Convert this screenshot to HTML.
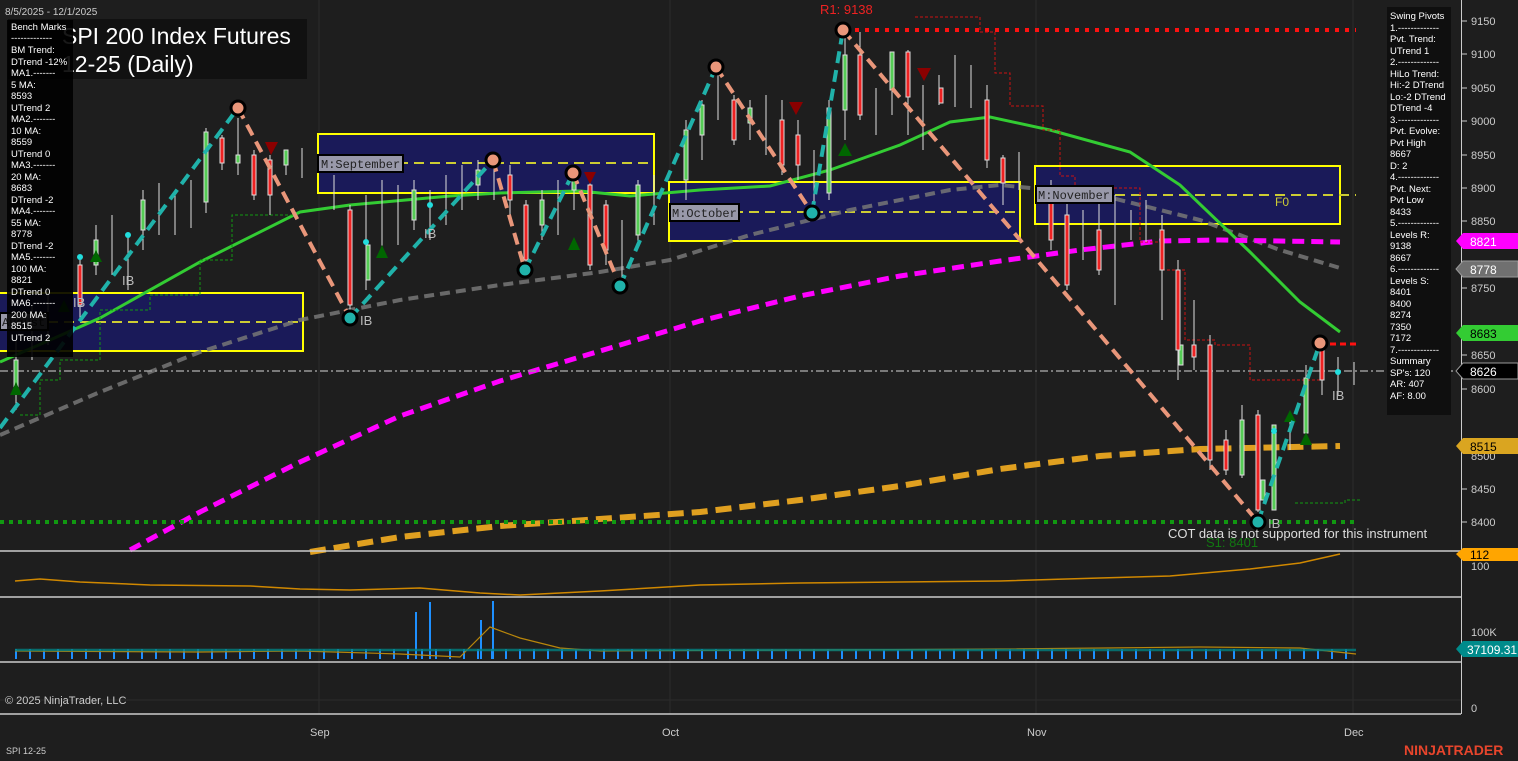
<!DOCTYPE html>
<html><head><meta charset="utf-8"><style>
html,body{margin:0;padding:0;background:#1e1e1e;width:1518px;height:761px;overflow:hidden;font-family:"Liberation Sans",sans-serif}
svg{position:absolute;left:0;top:0}
</style></head><body>
<svg width="1518" height="761" viewBox="0 0 1518 761" font-family="Liberation Sans, sans-serif">
<rect width="1518" height="761" fill="#1e1e1e"/>
<g stroke="#2c2c2c" stroke-width="1">
<line x1="319" y1="0" x2="319" y2="714"/><line x1="670" y1="0" x2="670" y2="714"/><line x1="1036" y1="0" x2="1036" y2="714"/><line x1="1353" y1="0" x2="1353" y2="714"/>
<line x1="0" y1="700" x2="1461" y2="700"/>
</g>
<g fill="#1a1a5e" fill-opacity="0.92" stroke="#ffff00" stroke-width="2">
<rect x="-2" y="293" width="305" height="58"/>
<rect x="318" y="134" width="336" height="59"/>
<rect x="669" y="182" width="351" height="59"/>
<rect x="1035" y="166" width="305" height="58"/>
</g>
<g stroke="#cccc33" stroke-width="2" stroke-dasharray="10,6">
<line x1="0" y1="322" x2="303" y2="322"/><line x1="318" y1="163" x2="654" y2="163"/><line x1="669" y1="212" x2="1020" y2="212"/><line x1="1035" y1="195" x2="1356" y2="195"/>
</g>
<polyline fill="none" stroke="#777" stroke-width="4" stroke-dasharray="10,6" stroke-opacity="0.85" points="0,435 100,392 200,352 300,320 400,300 500,285 600,272 670,260 750,235 850,210 950,190 1000,185 1100,195 1200,220 1280,250 1340,268"/>
<polyline fill="none" stroke="#33cc33" stroke-width="3" points="0,362 100,318 200,262 300,212 350,205 450,196 500,193 580,191 630,196 700,190 770,186 830,170 900,145 950,122 990,117 1050,130 1130,152 1180,185 1250,252 1300,302 1340,332"/>
<polyline fill="none" stroke="#ff00ff" stroke-width="5" stroke-dasharray="12,7" points="130,550 200,512 300,462 400,416 500,381 600,351 700,321 800,296 900,276 1000,261 1080,250 1160,241 1220,240 1340,242"/>
<polyline fill="none" stroke="#e0a020" stroke-width="6" stroke-dasharray="16,8" points="310,552 400,537 500,526 700,512 800,500 900,486 1000,469 1100,456 1200,449 1340,446"/>
<line x1="0" y1="371" x2="1461" y2="371" stroke="#999" stroke-width="1.5" stroke-dasharray="8,3,2,3"/>
<line x1="0" y1="522" x2="1356" y2="522" stroke="#119911" stroke-width="4" stroke-dasharray="4,5"/>
<line x1="845" y1="30" x2="1356" y2="30" stroke="#ff1111" stroke-width="4" stroke-dasharray="4,6"/>
<line x1="1320" y1="344" x2="1356" y2="344" stroke="#ff1111" stroke-width="3" stroke-dasharray="6,4"/>
<polyline fill="none" stroke="#cc1111" stroke-width="1" stroke-dasharray="3,2" points="915,17 980,17 980,32 995,32 995,73 1010,73 1010,106 1043,106 1043,130 1060,130 1060,176 1075,176 1075,188 1140,188 1140,242 1160,242 1160,270 1185,270 1185,340 1215,340 1215,345 1250,345 1250,380 1320,380"/>
<polyline fill="none" stroke="#119911" stroke-width="1" stroke-dasharray="3,2" points="20,415 40,415 40,380 60,380 60,360 100,360 100,310 150,310 150,295 200,295 200,260 232,260 232,215 300,215"/>
<polyline fill="none" stroke="#119911" stroke-width="1" stroke-dasharray="3,2" points="1295,503 1345,503 1345,500 1360,500"/>
<g stroke-width="1">
<g stroke="#ddd"><line x1="16" y1="340" x2="16" y2="410"/><line x1="32" y1="305" x2="32" y2="360"/><line x1="48" y1="290" x2="48" y2="345"/><line x1="80" y1="255" x2="80" y2="320"/><line x1="96" y1="225" x2="96" y2="275"/><line x1="112" y1="215" x2="112" y2="275"/><line x1="128" y1="235" x2="128" y2="290"/><line x1="143" y1="190" x2="143" y2="250"/><line x1="159" y1="183" x2="159" y2="235"/><line x1="175" y1="195" x2="175" y2="235"/><line x1="191" y1="180" x2="191" y2="228"/><line x1="206" y1="128" x2="206" y2="213"/><line x1="222" y1="135" x2="222" y2="170"/><line x1="238" y1="118" x2="238" y2="175"/><line x1="254" y1="150" x2="254" y2="200"/><line x1="270" y1="155" x2="270" y2="215"/><line x1="286" y1="150" x2="286" y2="175"/><line x1="302" y1="148" x2="302" y2="178"/><line x1="334" y1="175" x2="334" y2="210"/><line x1="350" y1="205" x2="350" y2="315"/><line x1="366" y1="195" x2="366" y2="290"/><line x1="382" y1="180" x2="382" y2="250"/><line x1="398" y1="185" x2="398" y2="245"/><line x1="414" y1="180" x2="414" y2="230"/><line x1="430" y1="190" x2="430" y2="240"/><line x1="446" y1="175" x2="446" y2="225"/><line x1="462" y1="165" x2="462" y2="210"/><line x1="478" y1="160" x2="478" y2="200"/><line x1="494" y1="158" x2="494" y2="200"/><line x1="510" y1="165" x2="510" y2="220"/><line x1="526" y1="200" x2="526" y2="270"/><line x1="542" y1="190" x2="542" y2="240"/><line x1="558" y1="180" x2="558" y2="235"/><line x1="574" y1="170" x2="574" y2="210"/><line x1="590" y1="180" x2="590" y2="270"/><line x1="606" y1="200" x2="606" y2="265"/><line x1="622" y1="220" x2="622" y2="285"/><line x1="638" y1="180" x2="638" y2="245"/><line x1="654" y1="175" x2="654" y2="225"/><line x1="686" y1="120" x2="686" y2="200"/><line x1="702" y1="100" x2="702" y2="160"/><line x1="718" y1="66" x2="718" y2="120"/><line x1="734" y1="95" x2="734" y2="145"/><line x1="750" y1="100" x2="750" y2="140"/><line x1="766" y1="95" x2="766" y2="155"/><line x1="782" y1="100" x2="782" y2="175"/><line x1="798" y1="120" x2="798" y2="180"/><line x1="814" y1="150" x2="814" y2="210"/><line x1="829" y1="100" x2="829" y2="200"/><line x1="845" y1="32" x2="845" y2="140"/><line x1="860" y1="32" x2="860" y2="120"/><line x1="876" y1="88" x2="876" y2="135"/><line x1="892" y1="55" x2="892" y2="115"/><line x1="908" y1="50" x2="908" y2="135"/><line x1="923" y1="85" x2="923" y2="150"/><line x1="939" y1="75" x2="939" y2="105"/><line x1="955" y1="55" x2="955" y2="107"/><line x1="971" y1="65" x2="971" y2="108"/><line x1="987" y1="85" x2="987" y2="168"/><line x1="1003" y1="155" x2="1003" y2="205"/><line x1="1019" y1="152" x2="1019" y2="190"/><line x1="1051" y1="180" x2="1051" y2="250"/><line x1="1067" y1="200" x2="1067" y2="290"/><line x1="1083" y1="210" x2="1083" y2="260"/><line x1="1099" y1="200" x2="1099" y2="275"/><line x1="1115" y1="195" x2="1115" y2="305"/><line x1="1131" y1="210" x2="1131" y2="240"/><line x1="1146" y1="200" x2="1146" y2="242"/><line x1="1162" y1="215" x2="1162" y2="320"/><line x1="1178" y1="260" x2="1178" y2="380"/><line x1="1194" y1="300" x2="1194" y2="370"/><line x1="1210" y1="335" x2="1210" y2="470"/><line x1="1226" y1="430" x2="1226" y2="475"/><line x1="1242" y1="405" x2="1242" y2="478"/><line x1="1258" y1="410" x2="1258" y2="512"/><line x1="1274" y1="425" x2="1274" y2="510"/><line x1="1290" y1="420" x2="1290" y2="450"/><line x1="1306" y1="365" x2="1306" y2="440"/><line x1="1322" y1="345" x2="1322" y2="395"/><line x1="1338" y1="357" x2="1338" y2="395"/><line x1="1354" y1="362" x2="1354" y2="385"/></g>
<g fill="#55cc55" stroke="#ddd"><rect x="14" y="360" width="4" height="30"/><rect x="94" y="240" width="4" height="25"/><rect x="141" y="200" width="4" height="30"/><rect x="204" y="132" width="4" height="70"/><rect x="236" y="155" width="4" height="8"/><rect x="284" y="150" width="4" height="15"/><rect x="366" y="245" width="4" height="35"/><rect x="412" y="190" width="4" height="30"/><rect x="476" y="170" width="4" height="15"/><rect x="540" y="200" width="4" height="25"/><rect x="572" y="175" width="4" height="15"/><rect x="636" y="185" width="4" height="50"/><rect x="684" y="130" width="4" height="50"/><rect x="700" y="105" width="4" height="30"/><rect x="748" y="108" width="4" height="15"/><rect x="827" y="108" width="4" height="85"/><rect x="843" y="55" width="4" height="55"/><rect x="890" y="52" width="4" height="38"/><rect x="1261" y="480" width="4" height="20"/><rect x="1179" y="345" width="4" height="20"/><rect x="1240" y="420" width="4" height="55"/><rect x="1272" y="425" width="4" height="85"/><rect x="1304" y="378" width="4" height="55"/></g>
<g fill="#ee2222" stroke="#ddd"><rect x="78" y="265" width="4" height="40"/><rect x="220" y="138" width="4" height="25"/><rect x="252" y="155" width="4" height="40"/><rect x="268" y="160" width="4" height="35"/><rect x="348" y="210" width="4" height="95"/><rect x="508" y="175" width="4" height="25"/><rect x="524" y="205" width="4" height="55"/><rect x="588" y="185" width="4" height="80"/><rect x="604" y="205" width="4" height="45"/><rect x="732" y="100" width="4" height="40"/><rect x="780" y="120" width="4" height="45"/><rect x="796" y="135" width="4" height="30"/><rect x="858" y="55" width="4" height="60"/><rect x="906" y="52" width="4" height="45"/><rect x="939" y="88" width="4" height="15"/><rect x="985" y="100" width="4" height="60"/><rect x="1001" y="158" width="4" height="25"/><rect x="1049" y="200" width="4" height="40"/><rect x="1065" y="215" width="4" height="70"/><rect x="1097" y="230" width="4" height="40"/><rect x="1160" y="230" width="4" height="40"/><rect x="1176" y="270" width="4" height="80"/><rect x="1192" y="345" width="4" height="12"/><rect x="1208" y="345" width="4" height="115"/><rect x="1224" y="440" width="4" height="30"/><rect x="1256" y="415" width="4" height="95"/><rect x="1320" y="350" width="4" height="30"/></g>
</g>
<g fill="#006600"><polygon points="16,382 10,395 22,395"/><polygon points="96,250 90,262 102,262"/><polygon points="382,245 376,258 388,258"/><polygon points="574,237 568,250 580,250"/><polygon points="845,143 838,156 852,156"/><polygon points="1306,432 1300,445 1312,445"/><polygon points="1290,410 1284,422 1296,422"/><polygon points="64,300 58,312 70,312"/></g>
<g fill="#8b0000"><polygon points="265,142 278,142 271,155"/><polygon points="789,102 803,102 796,115"/><polygon points="917,68 931,68 924,81"/><polygon points="584,172 596,172 590,184"/></g>
<g fill="#22dddd"><circle cx="80" cy="257" r="3"/><circle cx="128" cy="235" r="3"/><circle cx="366" cy="242" r="3"/><circle cx="430" cy="205" r="3"/><circle cx="1274" cy="431" r="3"/><circle cx="1338" cy="372" r="3"/></g>
<polyline fill="none" stroke="#20b2aa" stroke-width="4" stroke-dasharray="12,7" points="0,428 238,108"/>
<polyline fill="none" stroke="#e9967a" stroke-width="4" stroke-dasharray="12,7" points="238,108 350,318"/>
<polyline fill="none" stroke="#20b2aa" stroke-width="4" stroke-dasharray="12,7" points="350,318 493,160"/>
<polyline fill="none" stroke="#e9967a" stroke-width="4" stroke-dasharray="12,7" points="493,160 525,270"/>
<polyline fill="none" stroke="#20b2aa" stroke-width="4" stroke-dasharray="12,7" points="525,270 573,173"/>
<polyline fill="none" stroke="#e9967a" stroke-width="4" stroke-dasharray="12,7" points="573,173 620,286"/>
<polyline fill="none" stroke="#20b2aa" stroke-width="4" stroke-dasharray="12,7" points="620,286 716,67"/>
<polyline fill="none" stroke="#e9967a" stroke-width="4" stroke-dasharray="12,7" points="716,67 812,213"/>
<polyline fill="none" stroke="#20b2aa" stroke-width="4" stroke-dasharray="12,7" points="812,213 843,30"/>
<polyline fill="none" stroke="#e9967a" stroke-width="4" stroke-dasharray="12,7" points="843,30 1258,522"/>
<polyline fill="none" stroke="#20b2aa" stroke-width="4" stroke-dasharray="12,7" points="1258,522 1320,343"/>
<g stroke="#000" stroke-width="3"><circle cx="238" cy="108" r="7" fill="#e9967a"/><circle cx="350" cy="318" r="7" fill="#20b2aa"/><circle cx="493" cy="160" r="7" fill="#e9967a"/><circle cx="525" cy="270" r="7" fill="#20b2aa"/><circle cx="573" cy="173" r="7" fill="#e9967a"/><circle cx="620" cy="286" r="7" fill="#20b2aa"/><circle cx="716" cy="67" r="7" fill="#e9967a"/><circle cx="812" cy="213" r="7" fill="#20b2aa"/><circle cx="843" cy="30" r="7" fill="#e9967a"/><circle cx="1258" cy="522" r="7" fill="#20b2aa"/><circle cx="1320" cy="343" r="7" fill="#e9967a"/></g>
<g fill="#bbb" font-size="13"><text x="122" y="285">IB</text><text x="73" y="307">IB</text><text x="360" y="325">IB</text><text x="424" y="238">IB</text><text x="1268" y="528">IB</text><text x="1332" y="400">IB</text></g>
<text x="1275" y="206" fill="#cccc33" font-size="12">F0</text>
<text x="820" y="14" fill="#ee2222" font-size="13">R1: 9138</text>
<text x="1206" y="547" fill="#117711" font-size="13">S1: 8401</text>
<g font-family="Liberation Mono, monospace" font-size="12" fill="#222"><rect x="318" y="155" width="85" height="17" fill="#9999aa" stroke="#000" stroke-width="2"/><text x="321" y="168">M:September</text>
<rect x="670" y="204" width="69" height="17" fill="#9999aa" stroke="#000" stroke-width="2"/><text x="672" y="217">M:October</text>
<rect x="1036" y="186" width="77" height="17" fill="#9999aa" stroke="#000" stroke-width="2"/><text x="1038" y="199">M:November</text>
<rect x="0" y="313" width="48" height="17" fill="#9999aa" stroke="#000" stroke-width="2"/><text x="2" y="326">August</text></g>
<rect x="8" y="19" width="299" height="60" fill="#111"/>
<text x="62" y="44" fill="#fff" font-size="23">SPI 200 Index Futures</text>
<text x="62" y="72" fill="#fff" font-size="23">12-25 (Daily)</text>
<text x="5" y="15" fill="#ccc" font-size="10">8/5/2025 - 12/1/2025</text>
<rect x="7" y="20" width="66" height="337" fill="#000" fill-opacity="0.9"/>
<g fill="#fff" font-size="9.5"><text x="11" y="30">Bench Marks</text><text x="11" y="41">-------------</text><text x="11" y="53">BM Trend:</text><text x="11" y="65">DTrend -12%</text><text x="11" y="76">MA1.-------</text><text x="11" y="88">5 MA:</text><text x="11" y="99">8593</text><text x="11" y="111">UTrend 2</text><text x="11" y="122">MA2.-------</text><text x="11" y="134">10 MA:</text><text x="11" y="145">8559</text><text x="11" y="157">UTrend 0</text><text x="11" y="168">MA3.-------</text><text x="11" y="180">20 MA:</text><text x="11" y="191">8683</text><text x="11" y="203">DTrend -2</text><text x="11" y="214">MA4.-------</text><text x="11" y="226">55 MA:</text><text x="11" y="237">8778</text><text x="11" y="249">DTrend -2</text><text x="11" y="260">MA5.-------</text><text x="11" y="272">100 MA:</text><text x="11" y="283">8821</text><text x="11" y="295">DTrend 0</text><text x="11" y="306">MA6.-------</text><text x="11" y="318">200 MA:</text><text x="11" y="329">8515</text><text x="11" y="341">UTrend 2</text></g>
<rect x="1387" y="7" width="64" height="408" fill="#0f0f0f"/>
<g fill="#fff" font-size="9.5"><text x="1390" y="19">Swing Pivots</text><text x="1390" y="31">1.-------------</text><text x="1390" y="42">Pvt. Trend:</text><text x="1390" y="54">UTrend 1</text><text x="1390" y="65">2.-------------</text><text x="1390" y="77">HiLo Trend:</text><text x="1390" y="88">Hi:-2 DTrend</text><text x="1390" y="100">Lo:-2 DTrend</text><text x="1390" y="111">DTrend -4</text><text x="1390" y="123">3.-------------</text><text x="1390" y="134">Pvt. Evolve:</text><text x="1390" y="146">Pvt High</text><text x="1390" y="157">8667</text><text x="1390" y="169">D: 2</text><text x="1390" y="180">4.-------------</text><text x="1390" y="192">Pvt. Next:</text><text x="1390" y="203">Pvt Low</text><text x="1390" y="215">8433</text><text x="1390" y="226">5.-------------</text><text x="1390" y="238">Levels R:</text><text x="1390" y="249">9138</text><text x="1390" y="261">8667</text><text x="1390" y="272">6.-------------</text><text x="1390" y="284">Levels S:</text><text x="1390" y="295">8401</text><text x="1390" y="307">8400</text><text x="1390" y="318">8274</text><text x="1390" y="330">7350</text><text x="1390" y="341">7172</text><text x="1390" y="353">7.-------------</text><text x="1390" y="364">Summary</text><text x="1390" y="376">SP's: 120</text><text x="1390" y="387">AR: 407</text><text x="1390" y="399">AF: 8.00</text></g>
<text x="1168" y="538" fill="#ddd" font-size="13">COT data is not supported for this instrument</text>
<g stroke="#ccc" stroke-width="1.5"><line x1="0" y1="551" x2="1461" y2="551"/><line x1="0" y1="597" x2="1461" y2="597"/><line x1="0" y1="662" x2="1461" y2="662"/><line x1="0" y1="714" x2="1461" y2="714"/></g>
<line x1="1461.5" y1="0" x2="1461.5" y2="714" stroke="#ccc"/>
<polyline fill="none" stroke="#d08800" stroke-width="1.5" points="15,581 40,579 80,582 150,585 250,586 300,589 350,590 420,588 480,593 520,595 600,591 700,585 800,583 900,582 1000,581 1100,578 1170,576 1250,569 1300,563 1340,554"/>
<!-- volume -->
<line x1="15" y1="654" x2="1356" y2="654" stroke="#1e90ff" stroke-width="10" stroke-dasharray="2,12"/>
<g stroke="#1e90ff" stroke-width="2"><line x1="416" y1="612" x2="416" y2="659"/><line x1="430" y1="602" x2="430" y2="659"/><line x1="493" y1="601" x2="493" y2="659"/><line x1="481" y1="620" x2="481" y2="659"/></g>
<polyline fill="none" stroke="#b8860b" stroke-width="1.2" points="15,651 200,652 300,651 400,654 460,657 490,627 520,638 560,648 600,651 800,650 1000,649 1200,647 1300,648 1356,654"/>
<line x1="15" y1="650" x2="1356" y2="650" stroke="#008080" stroke-width="2.5" stroke-opacity="0.8"/>
<g fill="#ccc" font-size="11"><text x="1471" y="25">9150</text><text x="1471" y="58">9100</text><text x="1471" y="92">9050</text><text x="1471" y="125">9000</text><text x="1471" y="159">8950</text><text x="1471" y="192">8900</text><text x="1471" y="225">8850</text><text x="1471" y="292">8750</text><text x="1471" y="359">8650</text><text x="1471" y="393">8600</text><text x="1471" y="493">8450</text><text x="1471" y="526">8400</text><text x="1471" y="460">8500</text><text x="1471" y="570">100</text><text x="1471" y="636">100K</text><text x="1471" y="712">0</text></g>
<g stroke="#ccc"><line x1="1462" y1="21" x2="1467" y2="21"/><line x1="1462" y1="54" x2="1467" y2="54"/><line x1="1462" y1="88" x2="1467" y2="88"/><line x1="1462" y1="121" x2="1467" y2="121"/><line x1="1462" y1="155" x2="1467" y2="155"/><line x1="1462" y1="188" x2="1467" y2="188"/><line x1="1462" y1="221" x2="1467" y2="221"/><line x1="1462" y1="288" x2="1467" y2="288"/><line x1="1462" y1="355" x2="1467" y2="355"/><line x1="1462" y1="389" x2="1467" y2="389"/><line x1="1462" y1="489" x2="1467" y2="489"/><line x1="1462" y1="522" x2="1467" y2="522"/></g>
<g font-size="12"><polygon points="1456,241 1463,233 1518,233 1518,249 1463,249" fill="#ff00ff"/><text x="1470" y="246" fill="#fff">8821</text>
<polygon points="1456,269 1463,261 1518,261 1518,277 1463,277" fill="#707070" stroke="#999"/><text x="1470" y="274" fill="#fff">8778</text>
<polygon points="1456,333 1463,325 1518,325 1518,341 1463,341" fill="#33cc33"/><text x="1470" y="338" fill="#000">8683</text>
<polygon points="1456,371 1463,363 1518,363 1518,379 1463,379" fill="#000" stroke="#999"/><text x="1470" y="376" fill="#fff">8626</text>
<polygon points="1456,446 1463,438 1518,438 1518,454 1463,454" fill="#daa520"/><text x="1470" y="451" fill="#000">8515</text>
<polygon points="1456,554 1463,548 1518,548 1518,561 1463,561" fill="#ffa500"/><text x="1470" y="559" fill="#000">112</text>
<polygon points="1456,649 1463,641 1518,641 1518,657 1463,657" fill="#008b8b"/><text x="1467" y="654" fill="#fff">37109.31</text></g>
<g fill="#ccc" font-size="11"><text x="310" y="736">Sep</text><text x="662" y="736">Oct</text><text x="1027" y="736">Nov</text><text x="1344" y="736">Dec</text></g>
<text x="5" y="704" fill="#ccc" font-size="11">© 2025 NinjaTrader, LLC</text>
<text x="6" y="754" fill="#ccc" font-size="9">SPI 12-25</text>
<text x="1404" y="755" fill="#e8452c" font-size="14" font-weight="bold">NINJATRADER</text>
</svg>
</body></html>
